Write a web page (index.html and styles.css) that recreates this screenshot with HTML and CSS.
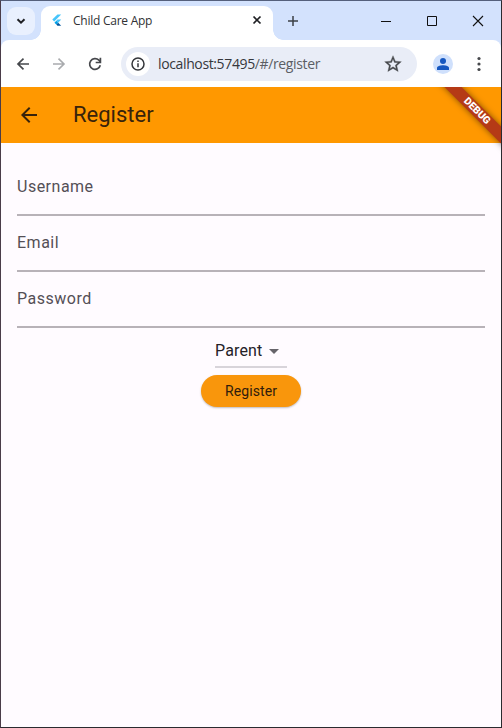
FILE: index.html
```html
<!DOCTYPE html>
<html lang="en">
<head>
<meta charset="utf-8">
<title>Child Care App</title>
<link rel="stylesheet" href="styles.css">
</head>
<body>
<div class="window">
  <header class="tabstrip">
    <button class="tab-search" aria-label="Search tabs"><svg width="10" height="10" viewBox="0 0 10 10"><path d="M1.5 3.2 5 6.6 8.5 3.2" fill="none" stroke="#1f2024" stroke-width="2"/></svg></button>
    <div class="tab">
      <svg class="favicon" width="16" height="16" viewBox="0 0 16 16"><path d="M9 2h4L5.5 9.5 3.5 7.500z" fill="#47c5fb"/><path d="M9 7.500h4L9.800 10.800 7.800 8.800z" fill="#47c5fb"/><path d="m5.800 10.800 2-2 2 2-2 2z" fill="#00a0e8"/><path d="m7.800 12.800 2-2 3.200 3.200H9z" fill="#00569e"/></svg>
      <span class="tab-title">Child Care App</span>
      <svg class="tab-close" width="10" height="10" viewBox="0 0 10 10"><path d="m1.500 1.500 7 7m0-7-7 7" stroke="#1f2024" stroke-width="1.700"/></svg>
    </div>
    <svg class="new-tab" width="12" height="12" viewBox="0 0 12 12"><path d="M6 1v10M1 6h10" stroke="#3c4046" stroke-width="1.500"/></svg>
    <div class="controls">
      <svg width="12" height="12" viewBox="0 0 12 12"><path d="M1 6.500h10" stroke="#111"/></svg>
      <svg width="12" height="12" viewBox="0 0 12 12"><path d="M1.500 1.500h9v9h-9z" fill="none" stroke="#111"/></svg>
      <svg width="12" height="12" viewBox="0 0 12 12"><path d="m1 1 10 10m0-10L1 11" stroke="#111" stroke-width="1.100"/></svg>
    </div>
  </header>
  <nav class="toolbar">
    <svg class="nav-icon" width="14" height="14" viewBox="0 0 14 14"><path d="M13 7H2m5.500-5.300L2 7l5.500 5.300" fill="none" stroke="#46484c" stroke-width="1.700"/></svg>
    <svg class="nav-icon" width="14" height="14" viewBox="0 0 14 14"><path d="M1 7h11M6.500 1.700 12 7l-5.500 5.300" fill="none" stroke="#a9abae" stroke-width="1.600"/></svg>
    <svg class="nav-icon" width="14" height="14" viewBox="0 0 14 14"><path d="M12.300 8.300A5.400 5.400 0 1 1 10.900 3.200L12.300 4.700" fill="none" stroke="#46484c" stroke-width="1.700"/><path d="M12.400.8v4.700H7.700" fill="none" stroke="#46484c" stroke-width="1.700"/></svg>
    <div class="omnibox">
      <span class="site-info"><svg width="14" height="14" viewBox="0 0 14 14"><circle cx="7" cy="7" r="6" fill="none" stroke="#34363a" stroke-width="1.500"/><path d="M7 6.200v4M7 3.600v1.500" stroke="#34363a" stroke-width="1.500"/></svg></span>
      <span class="url">localhost:57495<span class="path">/#/register</span></span>
      <svg class="star" width="20" height="20" viewBox="0 0 24 24"><path fill="#46484c" stroke="#46484c" stroke-width=".4" d="M22 9.240l-7.190-.62L12 2 9.190 8.630 2 9.240l5.460 4.730L5.820 21 12 17.270 18.180 21l-1.630-7.030zM12 15.400l-3.760 2.270 1-4.280-3.320-2.880 4.380-.38L12 6.100l1.710 4.040 4.380.38-3.320 2.880 1 4.280z"/></svg>
    </div>
    <span class="avatar"><svg width="14" height="14" viewBox="0 0 14 14"><circle cx="7" cy="4" r="3" fill="#1557c0"/><path d="M1 13v-2C1 9 4.500 8.200 7 8.200s6 .8 6 2.800v2z" fill="#1557c0"/></svg></span>
    <svg class="more" width="4" height="16" viewBox="0 0 4 16"><g fill="#46484c"><circle cx="2" cy="2.500" r="1.600"/><circle cx="2" cy="8" r="1.600"/><circle cx="2" cy="13.500" r="1.600"/></g></svg>
  </nav>
  <main class="app">
    <div class="appbar">
      <svg class="back" width="24" height="24" viewBox="0 0 24 24"><path fill="#38230b" d="M20 11H7.830l5.590-5.590L12 4l-8 8 8 8 1.410-1.410L7.830 13H20z"/></svg>
      <h1>Register</h1>
    </div>
    <form class="form">
      <label class="field">Username</label>
      <label class="field">Email</label>
      <label class="field">Password</label>
      <div class="dropdown"><span>Parent</span><svg width="24" height="24" viewBox="0 0 24 24"><path d="m7 10 5 5 5-5z" fill="#66646a"/></svg></div>
      <button class="submit" type="button">Register</button>
    </form>
    <div class="debug">DEBUG</div>
  </main>
</div>
</body>
</html>
```
FILE: styles.css
```css
* { box-sizing: border-box; }
body { margin: 0; }
button { border: 0; padding: 0; }
svg { display: block; flex: none; }

.window {
  width: 502px;
  height: 728px;
  display: flex;
  flex-direction: column;
  border: 1px solid #2b2a30;
  border-top-color: #55607c;
  border-left-color: #4a3c49;
  background: #d3e2fd;
  overflow: hidden;
  font-family: "Open Sans", "Noto Sans", sans-serif;
}

.tabstrip {
  height: 39px;
  flex: none;
  display: flex;
  align-items: center;
}
.tab-search {
  width: 28px;
  height: 28px;
  margin-left: 6px;
  border-radius: 9px;
  background: #e9f0fe;
  display: grid;
  place-items: center;
}
.tab {
  position: relative;
  align-self: flex-end;
  width: 232px;
  height: 34px;
  margin-left: 6px;
  padding: 0 11px 6px 8px;
  display: flex;
  align-items: center;
  background: #fff;
  border-radius: 9px 9px 0 0;
}
.tab::before,
.tab::after {
  content: "";
  position: absolute;
  bottom: 0;
  width: 10px;
  height: 10px;
}
.tab::before {
  left: -10px;
  background: radial-gradient(circle at 0 0, transparent 9.5px, #fff 10px);
}
.tab::after {
  right: -10px;
  background: radial-gradient(circle at 100% 0, transparent 9.5px, #fff 10px);
}
.favicon { width: 15px; }
.tab-title {
  margin-left: 9px;
  font-size: 12px;
  letter-spacing: -0.25px;
  color: #303134;
  white-space: nowrap;
}
.tab-close { margin-left: auto; }
.new-tab { margin-left: 14px; }
.controls {
  margin-left: auto;
  margin-right: 17px;
  display: flex;
  gap: 34px;
}

.toolbar {
  height: 47px;
  flex: none;
  display: flex;
  align-items: center;
  padding: 0 20px 0 15px;
  background: #fff;
  border-radius: 8px 8px 0 0;
}
.nav-icon { margin-right: 22px; }
.omnibox {
  width: 296px;
  height: 34px;
  margin-left: -3px;
  padding: 0 14px 0 5px;
  display: flex;
  align-items: center;
  border-radius: 17px;
  background: #e9edf7;
}
.site-info {
  width: 24px;
  height: 24px;
  border-radius: 50%;
  background: #fff;
  display: grid;
  place-items: center;
}
.url {
  margin-left: 8px;
  font-size: 14px;
  letter-spacing: -0.37px;
  color: #36383c;
  white-space: nowrap;
}
.path { color: #5b5e64; }
.star { margin-left: auto; }
.avatar {
  width: 20px;
  height: 20px;
  margin-left: 16px;
  border-radius: 50%;
  background: #cfe0fc;
  display: grid;
  place-items: center;
}
.more { margin-left: auto; }

.app {
  position: relative;
  flex: 1;
  overflow: hidden;
  background: #fffbff;
  font-family: Roboto, sans-serif;
}
.appbar {
  height: 56px;
  display: flex;
  align-items: center;
  padding-left: 16px;
  background: #ff9800;
}
.appbar h1 {
  margin: 0 0 0 32px;
  font-size: 22px;
  font-weight: 400;
  line-height: 28px;
  color: #38230b;
}
.form {
  padding: 17px 16px 0;
  display: flex;
  flex-direction: column;
  align-items: center;
}
.field {
  width: 100%;
  height: 56px;
  padding-top: 15px;
  border-bottom: 2px solid #b8b2b8;
  font-size: 16px;
  line-height: 24px;
  letter-spacing: 0.5px;
  color: #544f56;
}
.dropdown {
  width: 72px;
  height: 40px;
  padding-top: 11px;
  display: flex;
  align-items: flex-start;
  border-bottom: 2px solid #d8d4da;
  font-size: 16px;
  line-height: 24px;
  letter-spacing: 0.15px;
  color: #242127;
}
.submit {
  width: 100px;
  height: 32px;
  margin-top: 7px;
  border-radius: 16px;
  background: #f9960c;
  box-shadow: 0 1px 2px rgba(0, 0, 0, 0.25);
  font: 400 14px/20px Roboto, sans-serif;
  letter-spacing: 0.1px;
  color: #301c0c;
}
.debug {
  position: absolute;
  top: 18px;
  right: -36px;
  width: 120px;
  height: 12px;
  transform: rotate(45deg);
  background: #b53a16;
  box-shadow: 0 0 6px rgba(0, 0, 0, 0.5);
  font-size: 10.2px;
  font-weight: 900;
  line-height: 12px;
  text-align: center;
  color: #fff;
}
```
